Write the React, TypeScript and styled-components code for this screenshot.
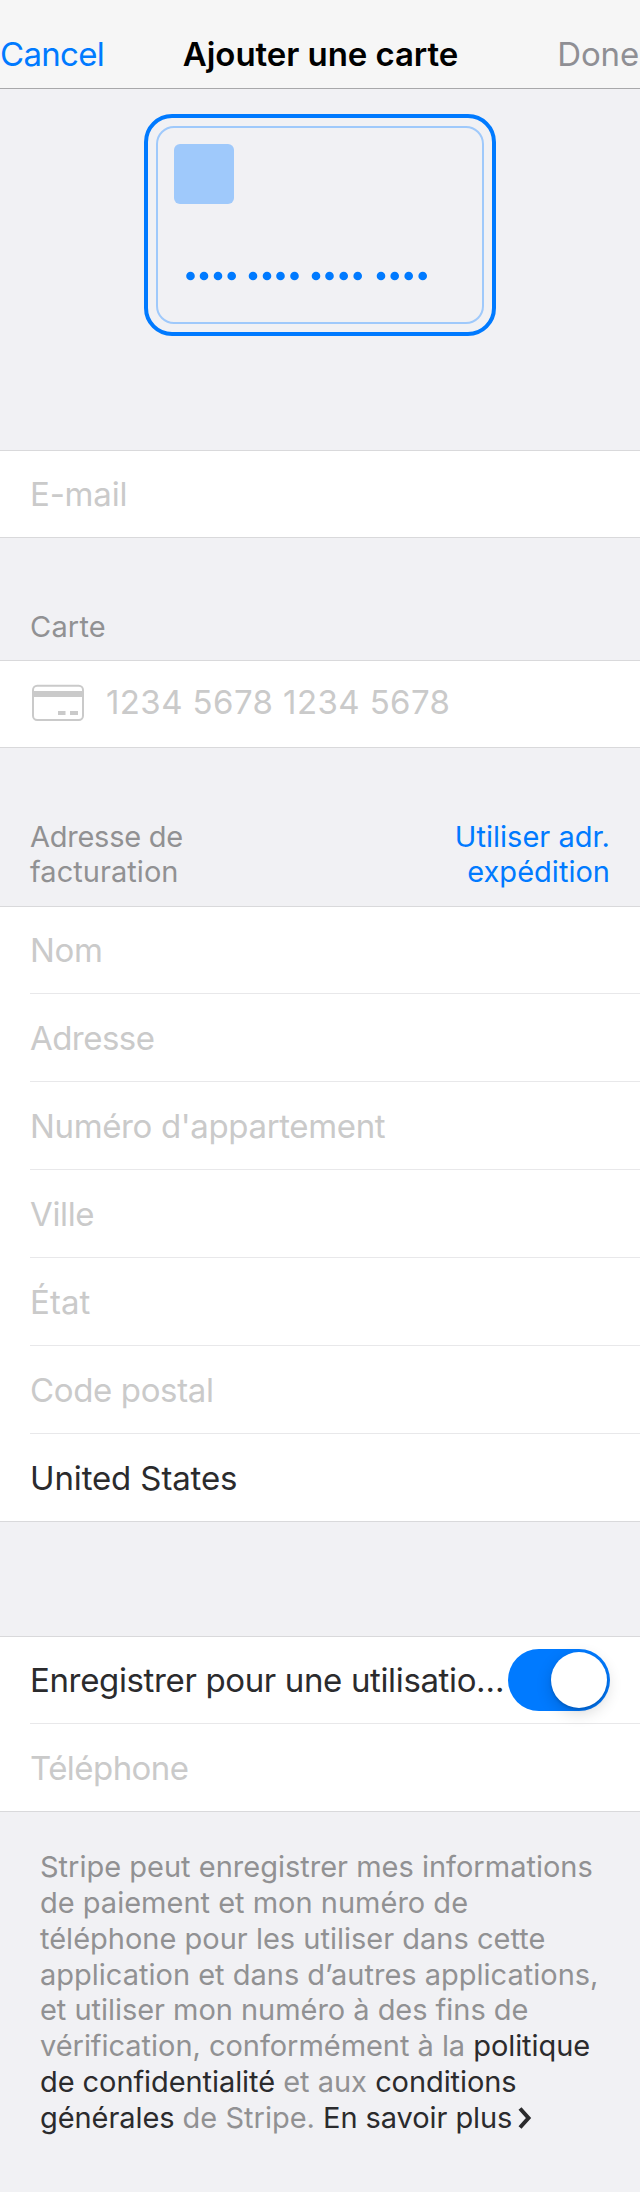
import React from "react";
import styled, { createGlobalStyle } from "styled-components";

const colors = {
  page: "#f1f1f4",
  surface: "#ffffff",
  bar: "#f6f6f6",
  barLine: "#a8a8aa",
  groupLine: "#d9d9db",
  rowLine: "#e8e8ea",
  blue: "#007aff",
  blueSoft: "#9fc9fb",
  placeholder: "#cacaca",
  label: "#919193",
  ink: "#2b2b2d",
};

const GlobalStyle = createGlobalStyle`
  * { box-sizing: border-box; }
  body {
    margin: 0;
    background: ${colors.page};
    font-family: Inter, "Liberation Sans", sans-serif;
    -webkit-font-smoothing: antialiased;
  }
  button { font: inherit; border: 0; background: none; padding: 0; }
`;

const Screen = styled.div`
  width: 640px;
  height: 2192px;
  display: flex;
  flex-direction: column;
  background: ${colors.page};
`;

const NavBar = styled.header`
  height: 89px;
  padding: 34px 0 0;
  display: grid;
  grid-template-columns: 1fr auto 1fr;
  align-items: start;
  background: ${colors.bar};
  border-bottom: 1px solid ${colors.barLine};
  font-size: 33px;
  line-height: 40px;
  white-space: nowrap;
`;

const NavTitle = styled.h1`
  margin: 0 0 0 1px;
  font-size: 33px;
  font-weight: 600;
  letter-spacing: -0.07px;
  color: #000;
`;

const NavButton = styled.button<{ $side: "start" | "end" }>`
  && {
    justify-self: ${(p) => p.$side};
    margin-right: ${(p) => (p.$side === "start" ? "0" : "1px")};
    color: ${(p) => (p.$side === "start" ? colors.blue : "#8f8f94")};
    letter-spacing: ${(p) => (p.$side === "start" ? "-0.7px" : "-0.15px")};
  }
`;

const Hero = styled.section`
  height: 361px;
  padding-top: 25px;
  display: flex;
  justify-content: center;
  align-items: flex-start;
`;

const GroupHeader = styled.div<{ $height: number; $bottom: number }>`
  height: ${(p) => p.$height}px;
  padding: 0 30px ${(p) => p.$bottom}px;
  display: flex;
  justify-content: space-between;
  align-items: flex-end;
  font-size: 29px;
  line-height: 35px;
  color: ${colors.label};
`;

const GroupLabel = styled.div<{ $tracking?: number }>`
  letter-spacing: ${(p) => p.$tracking ?? 0}px;
`;

const GroupAction = styled.button`
  && {
    color: ${colors.blue};
    text-align: right;
    letter-spacing: 0.02px;
  }
`;

const Group = styled.section`
  background: ${colors.surface};
  box-shadow: inset 0 1px ${colors.groupLine}, inset 0 -1px ${colors.groupLine};
`;

const Row = styled.div`
  height: 88px;
  margin-left: 30px;
  padding-right: 30px;
  display: flex;
  align-items: flex-start;
  border-bottom: 1px solid ${colors.rowLine};
  &:last-child { border-bottom-color: transparent; }
`;

const Field = styled.div<{ $filled?: boolean; $tracking?: number }>`
  margin-top: 24px;
  font-size: 33px;
  line-height: 40px;
  white-space: nowrap;
  letter-spacing: ${(p) => p.$tracking ?? -0.36}px;
  color: ${(p) => (p.$filled ? colors.ink : colors.placeholder)};
`;

const CardNumber = styled(Field)`
  margin: 22px 0 0 22px;
`;

const CardIcon = styled.svg`
  margin: 24px 0 0 2px;
  flex: none;
`;

const Spacer = styled.div<{ $height: number }>`
  height: ${(p) => p.$height}px;
`;

const SwitchTrack = styled.button`
  && {
    width: 102px;
    height: 62px;
    margin: 13px 0 0 auto;
    padding: 3px;
    flex: none;
    display: flex;
    justify-content: flex-end;
    border-radius: 31px;
    background: ${colors.blue};
  }
`;

const SwitchThumb = styled.span`
  width: 56px;
  height: 56px;
  border-radius: 50%;
  background: #fff;
  box-shadow: 0 5px 16px rgba(0, 0, 0, 0.16), 0 2px 3px rgba(0, 0, 0, 0.16);
`;

const Legal = styled.p`
  margin: 0;
  padding: 37.2px 0 0 40px;
  font-size: 29px;
  line-height: 35.8px;
  white-space: nowrap;
  color: ${colors.label};
`;

const LegalLink = styled.a`
  color: ${colors.ink};
  letter-spacing: -0.08px;
`;

const LegalTight = styled.span`
  letter-spacing: -0.04px;
`;

const Chevron = styled.svg`
  margin-left: 5px;
  vertical-align: -2px;
`;

const dots = [
  190.5, 204, 218, 231.7, 253, 267, 280.5, 294.5, 316, 329.5, 343.7, 357.7, 381, 394.7, 408.7, 422.7,
];

const addressFields = [
  { name: "Nom" },
  { name: "Adresse", tracking: -0.55 },
  { name: "Numéro d'appartement" },
  { name: "Ville" },
  { name: "État", tracking: 0.1 },
  { name: "Code postal" },
];

function CardArt() {
  return (
    <svg width="352" height="222" viewBox="144 114 352 222" fill="none">
      <rect x="146" y="116" width="348" height="218" rx="26" stroke={colors.blue} strokeWidth="4" />
      <rect x="157" y="127" width="326" height="196" rx="17" stroke={colors.blueSoft} strokeWidth="2" />
      <rect x="174" y="144" width="60" height="60" rx="6" fill={colors.blueSoft} />
      {dots.map((x) => (
        <circle key={x} cx={x} cy="276" r="4.3" fill={colors.blue} />
      ))}
    </svg>
  );
}

function CardGlyph() {
  return (
    <CardIcon width="52" height="38" viewBox="0 0 52 38" fill="none">
      <rect x="1" y="1.8" width="50" height="34.2" rx="4.2" stroke={colors.placeholder} strokeWidth="2" />
      <path d="M1 7h50v6H1zM26 27h7.5v4H26zM38 27h8v4h-8z" fill={colors.placeholder} />
    </CardIcon>
  );
}

export default function App() {
  return (
    <Screen>
      <GlobalStyle />
      <NavBar>
        <NavButton $side="start">Cancel</NavButton>
        <NavTitle>Ajouter une carte</NavTitle>
        <NavButton $side="end">Done</NavButton>
      </NavBar>

      <Hero>
        <CardArt />
      </Hero>

      <Group>
        <Row>
          <Field $tracking={-0.2}>E-mail</Field>
        </Row>
      </Group>

      <GroupHeader $height={122} $bottom={16}>
        <GroupLabel $tracking={0.2}>Carte</GroupLabel>
      </GroupHeader>
      <Group>
        <Row>
          <CardGlyph />
          <CardNumber $tracking={0.41}>1234 5678 1234 5678</CardNumber>
        </Row>
      </Group>

      <GroupHeader $height={158} $bottom={17}>
        <GroupLabel>
          <GroupLabel $tracking={-0.25}>Adresse de</GroupLabel>
          <GroupLabel $tracking={0.05}>facturation</GroupLabel>
        </GroupLabel>
        <GroupAction>
          Utiliser adr.
          <br />
          expédition
        </GroupAction>
      </GroupHeader>
      <Group>
        {addressFields.map(({ name, tracking }) => (
          <Row key={name}>
            <Field $tracking={tracking}>{name}</Field>
          </Row>
        ))}
        <Row>
          <Field $filled $tracking={-0.13}>United States</Field>
        </Row>
      </Group>

      <Spacer $height={114} />
      <Group>
        <Row>
          <Field $filled $tracking={-0.36}>Enregistrer pour une utilisatio…</Field>
          <SwitchTrack role="switch" aria-checked="true">
            <SwitchThumb />
          </SwitchTrack>
        </Row>
        <Row>
          <Field $tracking={-0.55}>Téléphone</Field>
        </Row>
      </Group>

      <Legal>
        Stripe peut enregistrer mes informations
        <br />
        de paiement et mon numéro de
        <br />
        téléphone pour les utiliser dans cette
        <br />
        application et dans d’autres applications,
        <br />
        <LegalTight>et utiliser mon numéro à des fins de</LegalTight>
        <br />
        <LegalTight>vérification, conformément à la </LegalTight>
        <LegalLink>politique</LegalLink>
        <br />
        <LegalLink>de confidentialité</LegalLink> et aux <LegalLink>conditions</LegalLink>
        <br />
        <LegalLink>générales</LegalLink> de Stripe. <LegalLink>En savoir plus</LegalLink>
        <Chevron width="16" height="24" viewBox="0 0 16 24" fill="none">
          <path d="M3 2.5L11.5 12L3 21.5" stroke={colors.ink} strokeWidth="4" />
        </Chevron>
      </Legal>
    </Screen>
  );
}
